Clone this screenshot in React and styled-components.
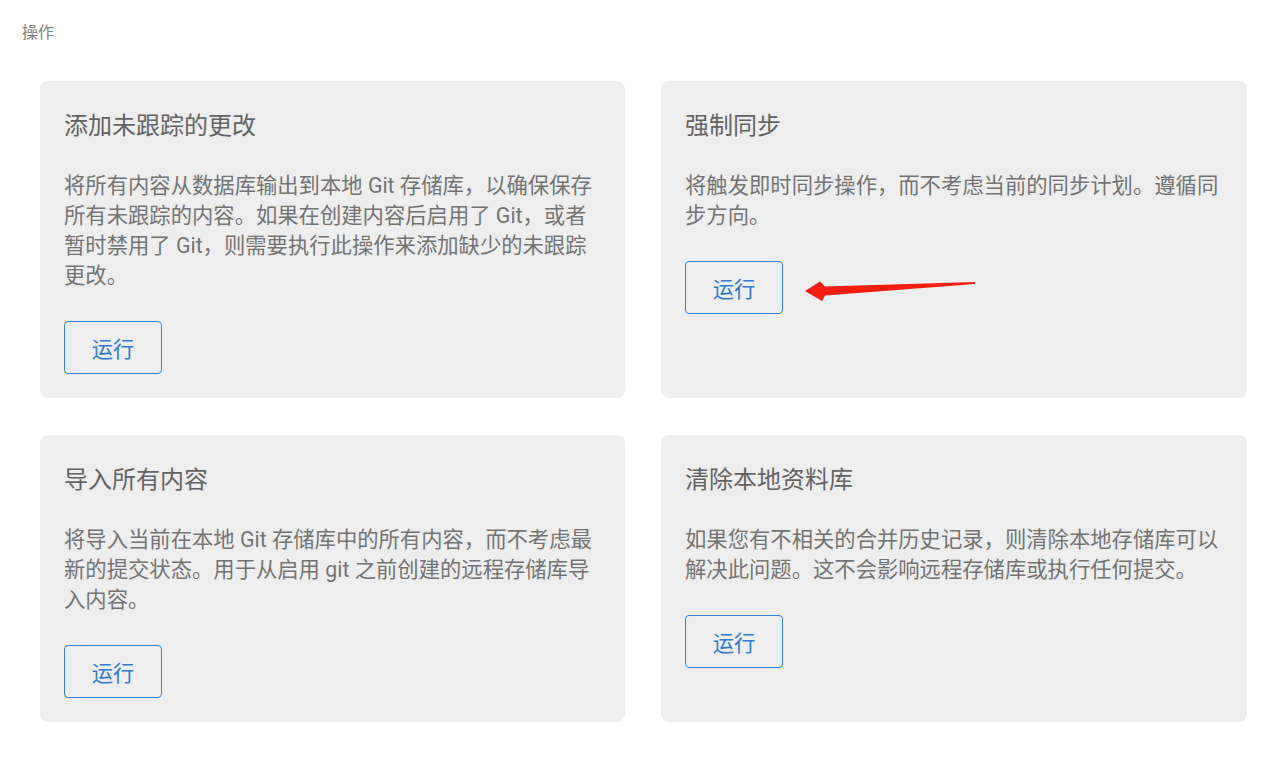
import styled, { createGlobalStyle } from "styled-components";

const GlobalStyle = createGlobalStyle`
  body {
    margin: 0;
    background: #fff;
    font-family: Roboto, "Noto Sans CJK SC", sans-serif;
  }
`;

const Page = styled.div`
  padding: 21px 31px 40px 22px;
`;

const Heading = styled.div`
  font-size: 16px;
  line-height: 24px;
  color: #808080;
  margin-bottom: 36px;
`;

const Grid = styled.div`
  display: grid;
  grid-template-columns: 585px 586px;
  column-gap: 36px;
  row-gap: 37px;
  margin-left: 18px;
`;

const Card = styled.div`
  position: relative;
  background: #eeeeee;
  border-radius: 8px;
  padding: 27px 24px 24px;
  display: flex;
  flex-direction: column;
  align-items: flex-start;
`;

const Title = styled.div`
  font-size: 24px;
  line-height: 36px;
  color: #636363;
`;

const Text = styled.p`
  margin: 27px 0 0;
  font-size: 21.33px;
  line-height: 30px;
  color: #737373;
`;

const RunButton = styled.button`
  margin-top: 30px;
  width: 98px;
  height: 53px;
  padding: 0;
  background: transparent;
  border: 1px solid #3482d6;
  border-radius: 4px;
  color: #2f7bcf;
  font-family: inherit;
  font-size: 21.33px;
  cursor: pointer;
`;

const Arrow = styled.svg`
  position: absolute;
  left: 140px;
  top: 195px;
  width: 180px;
  height: 30px;
  pointer-events: none;
`;

const actions = [
  {
    title: "添加未跟踪的更改",
    text: "将所有内容从数据库输出到本地 Git 存储库，以确保保存所有未跟踪的内容。如果在创建内容后启用了 Git，或者暂时禁用了 Git，则需要执行此操作来添加缺少的未跟踪更改。",
  },
  {
    title: "强制同步",
    text: "将触发即时同步操作，而不考虑当前的同步计划。遵循同步方向。",
    marked: true,
  },
  {
    title: "导入所有内容",
    text: "将导入当前在本地 Git 存储库中的所有内容，而不考虑最新的提交状态。用于从启用 git 之前创建的远程存储库导入内容。",
  },
  {
    title: "清除本地资料库",
    text: "如果您有不相关的合并历史记录，则清除本地存储库可以解决此问题。这不会影响远程存储库或执行任何提交。",
  },
];

const App = () => {
  return (
    <Page>
      <GlobalStyle />
      <Heading>操作</Heading>
      <Grid>
        {actions.map((a) => (
          <Card key={a.title}>
            <Title>{a.title}</Title>
            <Text>{a.text}</Text>
            <RunButton>运行</RunButton>
            {a.marked && (
              <Arrow viewBox="0 0 180 30">
                <path
                  d="M4 15 L19 5.5 L24 10.5 L174 6 L174 8 L24 19.5 L21 25 Z"
                  fill="#f41f12"
                />
              </Arrow>
            )}
          </Card>
        ))}
      </Grid>
    </Page>
  );
};

export default App;
